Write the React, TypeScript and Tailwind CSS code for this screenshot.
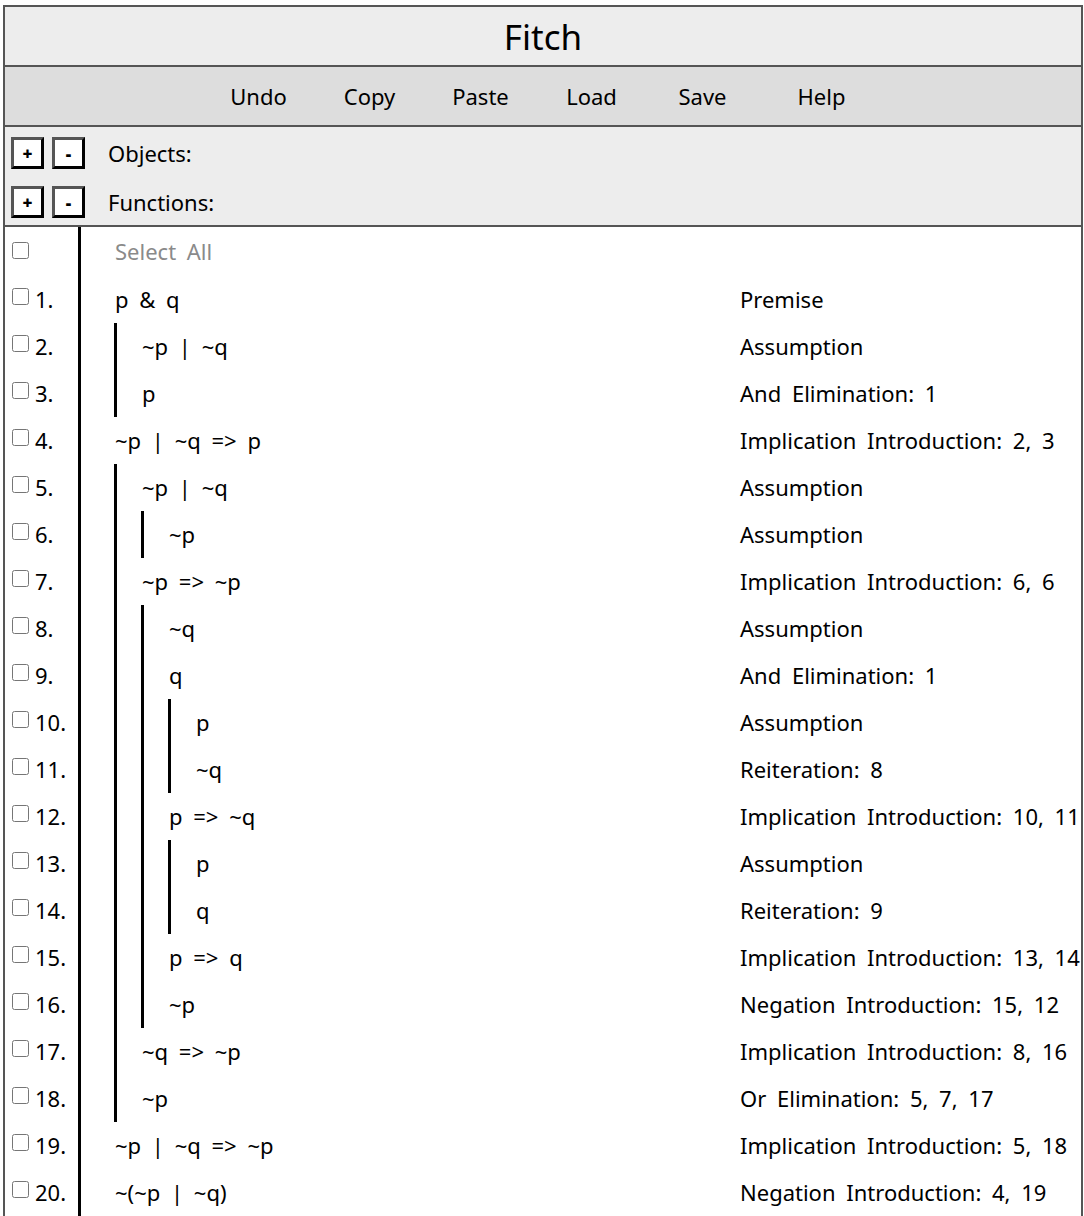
import { useState } from "react";

type Line = {
  n: number;
  formula: string;
  depth: number;
  rule: string;
};

const LINES: Line[] = [
  { n: 1, formula: "p & q", depth: 0, rule: "Premise" },
  { n: 2, formula: "~p | ~q", depth: 1, rule: "Assumption" },
  { n: 3, formula: "p", depth: 1, rule: "And Elimination: 1" },
  { n: 4, formula: "~p | ~q => p", depth: 0, rule: "Implication Introduction: 2, 3" },
  { n: 5, formula: "~p | ~q", depth: 1, rule: "Assumption" },
  { n: 6, formula: "~p", depth: 2, rule: "Assumption" },
  { n: 7, formula: "~p => ~p", depth: 1, rule: "Implication Introduction: 6, 6" },
  { n: 8, formula: "~q", depth: 2, rule: "Assumption" },
  { n: 9, formula: "q", depth: 2, rule: "And Elimination: 1" },
  { n: 10, formula: "p", depth: 3, rule: "Assumption" },
  { n: 11, formula: "~q", depth: 3, rule: "Reiteration: 8" },
  { n: 12, formula: "p => ~q", depth: 2, rule: "Implication Introduction: 10, 11" },
  { n: 13, formula: "p", depth: 3, rule: "Assumption" },
  { n: 14, formula: "q", depth: 3, rule: "Reiteration: 9" },
  { n: 15, formula: "p => q", depth: 2, rule: "Implication Introduction: 13, 14" },
  { n: 16, formula: "~p", depth: 2, rule: "Negation Introduction: 15, 12" },
  { n: 17, formula: "~q => ~p", depth: 1, rule: "Implication Introduction: 8, 16" },
  { n: 18, formula: "~p", depth: 1, rule: "Or Elimination: 5, 7, 17" },
  { n: 19, formula: "~p | ~q => ~p", depth: 0, rule: "Implication Introduction: 5, 18" },
  { n: 20, formula: "~(~p | ~q)", depth: 0, rule: "Negation Introduction: 4, 19" },
];

const MENU = ["Undo", "Copy", "Paste", "Load", "Save"];

function Box({ children }: { children: string }) {
  return (
    <button className="w-[33px] h-[32px] bg-white border-[3px] border-[#555] border-r-black border-b-black flex items-center justify-center text-[17px] font-black leading-none text-black">
      {children}
    </button>
  );
}

function Check({ checked, onChange }: { checked: boolean; onChange: () => void }) {
  return (
    <input
      type="checkbox"
      checked={checked}
      onChange={onChange}
      className="w-[17px] h-[17px] m-0 shrink-0"
    />
  );
}

export default function App() {
  const [selected, setSelected] = useState<Record<number, boolean>>({});
  const allOn = LINES.every((l) => selected[l.n]);

  const toggleAll = () => {
    const next: Record<number, boolean> = {};
    LINES.forEach((l) => (next[l.n] = !allOn));
    setSelected(next);
  };

  return (
    <div
      className="pt-[5px] pl-[3px] bg-white min-h-screen text-black [word-spacing:5px]"
      style={{ fontFamily: '"Noto Sans", "Open Sans", sans-serif' }}
    >
      <div className="w-[1080px] border-x-2 border-t-2 border-[#555]">
        {/* Title */}
        <div className="h-[60px] bg-[#ededed] border-b-2 border-[#555] flex items-center justify-center text-[35px] leading-none">
          Fitch
        </div>

        {/* Menu */}
        <div className="h-[60px] bg-[#dddddd] border-b-2 border-[#555] flex items-center justify-center pr-[6px] text-[22px]">
          {MENU.map((m) => (
            <span key={m} className="w-[111px] text-center cursor-pointer">
              {m}
            </span>
          ))}
          <span className="w-[111px] ml-2 text-center cursor-pointer">Help</span>
        </div>

        {/* Objects / Functions */}
        <div className="h-[100px] bg-[#ededed] border-b-2 border-[#555] flex flex-col pt-[10px] pl-[6px] gap-[17px] text-[22px]">
          <div className="flex items-center h-[32px]">
            <Box>+</Box>
            <div className="w-[8px]" />
            <Box>-</Box>
            <span className="ml-[23px]">Objects:</span>
          </div>
          <div className="flex items-center h-[32px]">
            <Box>+</Box>
            <div className="w-[8px]" />
            <Box>-</Box>
            <span className="ml-[23px]">Functions:</span>
          </div>
        </div>

        {/* Proof */}
        <div className="text-[22px]">
          <div className="flex h-[49px]">
            <div className="w-[76px] shrink-0 border-r-[3px] border-black pl-[7px] flex items-center pb-[3px]">
              <Check checked={allOn} onChange={toggleAll} />
            </div>
            <div className="pl-[34px] flex items-center text-[#8a8a8a]">Select All</div>
          </div>

          {LINES.map((l) => (
            <div key={l.n} className="flex h-[47px]">
              <div className="w-[76px] shrink-0 border-r-[3px] border-black pl-[7px] flex items-center gap-[6px]">
                <div className="pb-[6px] flex">
                  <Check
                    checked={!!selected[l.n]}
                    onChange={() =>
                      setSelected((s) => ({ ...s, [l.n]: !s[l.n] }))
                    }
                  />
                </div>
                <span className="[word-spacing:0px]">{l.n}.</span>
              </div>
              <div className="flex-1 flex pl-[33px]">
                {Array.from({ length: l.depth }).map((_, i) => (
                  <div key={i} className="w-[3px] bg-black mr-[24px] shrink-0" />
                ))}
                <div className="flex-1 flex items-center whitespace-pre pl-[1px]">{l.formula}</div>
              </div>
              <div className="w-[341px] shrink-0 flex items-center whitespace-nowrap">
                {l.rule}
              </div>
            </div>
          ))}
        </div>
      </div>
    </div>
  );
}
